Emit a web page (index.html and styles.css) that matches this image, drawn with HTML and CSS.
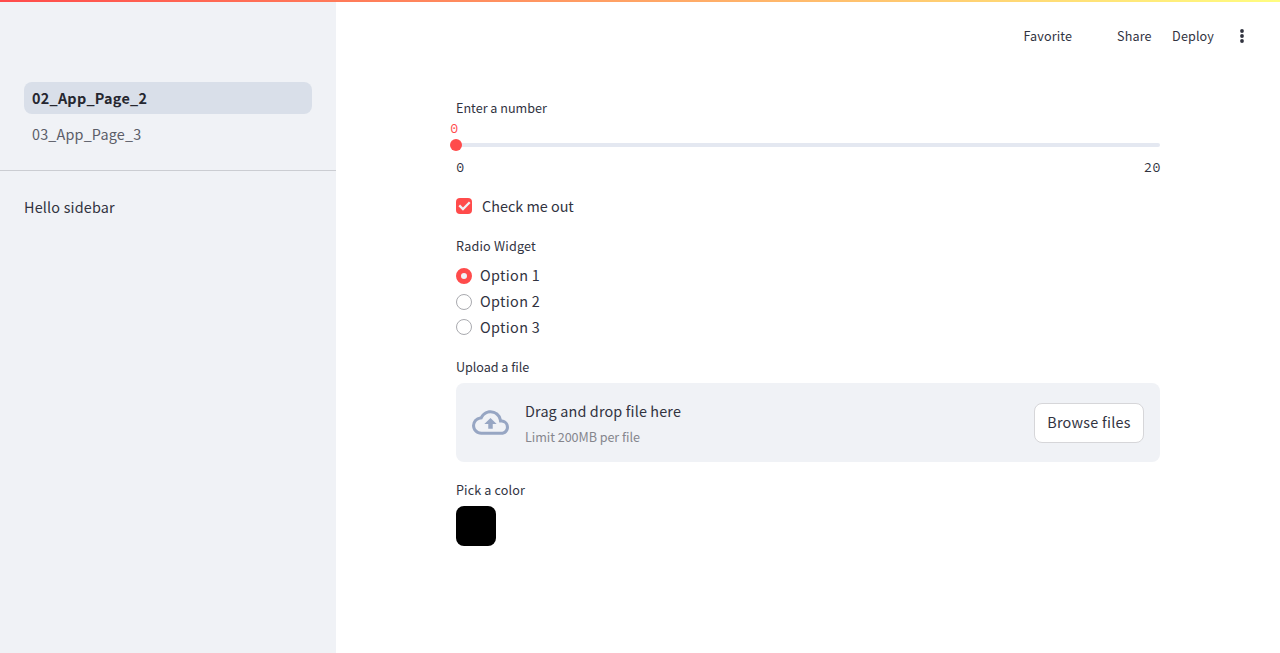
FILE: index.html
```html
<!DOCTYPE html>
<html lang="en">
<head>
<meta charset="utf-8">
<title>App Page</title>
<link rel="stylesheet" href="styles.css">
</head>
<body>
<div class="decoration"></div>
<div class="app">
  <aside class="sidebar">
    <nav class="nav">
      <a class="nav-link active">02_App_Page_2</a>
      <a class="nav-link">03_App_Page_3</a>
    </nav>
    <p class="sidebar-text">Hello sidebar</p>
  </aside>
  <main class="main">
    <header class="toolbar">
      <span class="tool favorite">Favorite</span>
      <span class="tool share">Share</span>
      <span class="tool deploy">Deploy</span>
      <svg class="menu" viewBox="0 0 20 20"><circle cx="10" cy="5" r="1.9"/><circle cx="10" cy="10" r="1.9"/><circle cx="10" cy="15" r="1.9"/></svg>
    </header>
    <section class="content">
      <div class="label l-number">Enter a number</div>
      <div class="slider">
        <div class="slider-value">0</div>
        <div class="track"><span class="thumb"></span></div>
        <div class="ticks"><span>0</span><span>20</span></div>
      </div>
      <label class="checkbox">
        <span class="check-box"><svg viewBox="0 0 17 13"><path d="M6.5 12.6.6 6.7l2.1-2.1 3.8 3.8L14.3.6l2.1 2.1z"/></svg></span>
        <span class="t-check">Check me out</span>
      </label>
      <div class="label l-radio">Radio Widget</div>
      <div class="radios">
        <label class="radio"><span class="dot on"></span><span class="option">Option 1</span></label>
        <label class="radio"><span class="dot"></span><span class="option">Option 2</span></label>
        <label class="radio"><span class="dot"></span><span class="option">Option 3</span></label>
      </div>
      <div class="label l-upload">Upload a file</div>
      <div class="dropzone">
        <svg class="cloud" viewBox="0 0 24 24"><path d="M19.35 10.04A7.49 7.49 0 0 0 12 4C9.11 4 6.6 5.64 5.35 8.04A5.994 5.994 0 0 0 0 14c0 3.31 2.69 6 6 6h13c2.76 0 5-2.24 5-5 0-2.64-2.05-4.78-4.65-4.96zM19 18H6c-2.21 0-4-1.79-4-4 0-2.05 1.53-3.76 3.56-3.97l1.07-.11.5-.95A5.469 5.469 0 0 1 12 6c2.62 0 4.88 1.86 5.39 4.43l.3 1.5 1.53.11A2.98 2.98 0 0 1 22 15c0 1.65-1.35 3-3 3zM8 13h2.55v3h2.9v-3H16l-4-4z"/></svg>
        <div class="drop-text">
          <span class="drop-title">Drag and drop file here</span>
          <small class="drop-limit">Limit 200MB per file</small>
        </div>
        <button class="browse">Browse files</button>
      </div>
      <div class="label l-color">Pick a color</div>
      <div class="swatch"></div>
    </section>
  </main>
</div>
</body>
</html>
```
FILE: styles.css
```css
* { box-sizing: border-box; }
body {
  margin: 0;
  background: #fff;
  color: #31333f;
  font-family: "Source Sans Pro", "Noto Sans CJK SC", sans-serif;
  font-size: 14.4px;
  line-height: 24px;
  white-space: nowrap;
}
.decoration {
  position: absolute;
  top: 0;
  left: 0;
  width: 100%;
  height: 2px;
  background: linear-gradient(90deg, #ff4b4b, #fffd80);
}
.app { display: flex; height: 653px; overflow: hidden; }
.sidebar { width: 336px; background: #f0f2f6; }
.nav {
  display: flex;
  flex-direction: column;
  gap: 4px;
  padding: 82px 24px 20px;
  border-bottom: 1px solid #cbcdd2;
}
.nav-link {
  height: 32px;
  padding: 0 8px;
  border-radius: 8px;
  line-height: 32px;
  letter-spacing: 0.17px;
  color: #5b5d68;
}
.nav-link.active { background: #d9dfe9; color: #262730; font-weight: 600; letter-spacing: 0.25px; }
.sidebar-text { margin: 24px 24px 0; letter-spacing: 0.18px; }
.main { flex: 1; }
.toolbar {
  display: flex;
  align-items: center;
  justify-content: flex-end;
  height: 72px;
  padding-right: 28px;
  font-size: 12.6px;
  letter-spacing: 0.12px;
}
.share { margin-left: 45px; }
.deploy { margin-left: 20.5px; }
.menu { width: 20px; height: 20px; margin-left: 18px; fill: #31333f; }
.content { width: 704px; margin: 26px 0 0 120px; }
.label { height: 20px; line-height: 20px; font-size: 12.6px; }
.slider { font: 14px/20px "Source Code Pro", "Liberation Mono", monospace; }
.slider-value { width: 8px; margin-left: -6px; color: #ff4b4b; }
.track {
  display: flex;
  align-items: center;
  height: 4px;
  margin-top: 5px;
  border-radius: 4px;
  background: #e4e8f1;
}
.thumb { flex: none; width: 12px; height: 12px; margin-left: -6px; border-radius: 50%; background: #ff4b4b; }
.ticks { display: flex; justify-content: space-between; margin: 10px -0.6px 0 0; }
.checkbox { display: flex; align-items: center; gap: 10px; height: 24px; margin-top: 17px; }
.check-box {
  display: flex;
  align-items: center;
  justify-content: center;
  width: 16px;
  height: 16px;
  border-radius: 4px;
  background: #ff4b4b;
}
.check-box svg { width: 13px; height: 10px; fill: #f0f2f6; }
.l-radio { margin-top: 18px; letter-spacing: 0.2px; }
.radios { margin-top: 7px; }
.radio { display: flex; align-items: center; gap: 8px; height: 25.8px; }
.option { padding-bottom: 1px; letter-spacing: 0.34px; }
.dot { width: 16px; height: 16px; border: 1px solid #a9aaaf; border-radius: 50%; background: #fff; }
.dot.on { border: 5px solid #ff4b4b; background: #f0f2f6; }
.l-upload { margin-top: 16.6px; letter-spacing: -0.04px; }
.dropzone {
  display: flex;
  align-items: center;
  height: 79px;
  margin-top: 6px;
  padding: 0 16px;
  border-radius: 8px;
  background: #f0f2f6;
}
.cloud { width: 37px; height: 37px; fill: #97a6c3; }
.drop-text { display: flex; flex-direction: column; margin: 3px auto 0 16px; }
.drop-title { height: 27px; letter-spacing: 0.14px; }
.drop-limit { font-size: 12.6px; color: #85868d; line-height: 22px; letter-spacing: -0.05px; }
.browse {
  width: 110px;
  height: 40px;
  margin-top: 1px;
  padding: 0 0 1px;
  border: 1px solid #d6d6d9;
  border-radius: 8px;
  background: #fff;
  color: #31333f;
  font: inherit;
  letter-spacing: 0.26px;
}
.l-color { margin-top: 18px; letter-spacing: 0.14px; }
.swatch { width: 40px; height: 40px; margin-top: 6px; border-radius: 8px; background: #000; }
```
